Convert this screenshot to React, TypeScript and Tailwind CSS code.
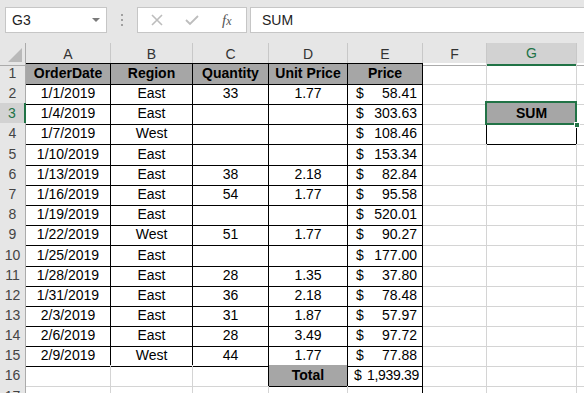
import clsx from "clsx";

type Row = { date: string; region: string; qty: string; unit: string; price: string };

const rows: Row[] = [
  { date: "1/1/2019", region: "East", qty: "33", unit: "1.77", price: "58.41" },
  { date: "1/4/2019", region: "East", qty: "", unit: "", price: "303.63" },
  { date: "1/7/2019", region: "West", qty: "", unit: "", price: "108.46" },
  { date: "1/10/2019", region: "East", qty: "", unit: "", price: "153.34" },
  { date: "1/13/2019", region: "East", qty: "38", unit: "2.18", price: "82.84" },
  { date: "1/16/2019", region: "East", qty: "54", unit: "1.77", price: "95.58" },
  { date: "1/19/2019", region: "East", qty: "", unit: "", price: "520.01" },
  { date: "1/22/2019", region: "West", qty: "51", unit: "1.77", price: "90.27" },
  { date: "1/25/2019", region: "East", qty: "", unit: "", price: "177.00" },
  { date: "1/28/2019", region: "East", qty: "28", unit: "1.35", price: "37.80" },
  { date: "1/31/2019", region: "East", qty: "36", unit: "2.18", price: "78.48" },
  { date: "2/3/2019", region: "East", qty: "31", unit: "1.87", price: "57.97" },
  { date: "2/6/2019", region: "East", qty: "28", unit: "3.49", price: "97.72" },
  { date: "2/9/2019", region: "West", qty: "44", unit: "1.77", price: "77.88" },
];

// rows 4, 9 and 16 are a pixel taller in the screenshot
const tall = [4, 9, 16];
const rowClass = (n: number) => clsx("grid grid-cols-[26px_85px_82px_76px_79px_75px_64px_90px_1fr]", tall.includes(n) ? "h-[21px]" : "h-[20px]");

const gridCols = "grid grid-cols-[26px_85px_82px_76px_79px_75px_64px_90px_1fr]";
const cell = "h-full flex items-center border-r border-b border-[#d4d4d4] overflow-hidden whitespace-nowrap";
const box = "border-black";
const head = "bg-[#a6a6a6] font-bold";

function RowHead({ n, active }: { n: number; active?: boolean }) {
  return (
    <div
      className={clsx(
        "h-full flex items-center justify-center border-b border-[#d4d4d4] text-[14px]",
        active
          ? "bg-[#d2d2d2] text-[#217346] border-r-2 border-r-[#217346]"
          : "bg-[#e6e6e6] text-[#444] border-r border-r-[#ababab]"
      )}
    >
      {n}
    </div>
  );
}

function Money({ value, total }: { value: string; total?: boolean }) {
  return (
    <div className={clsx(cell, box, "justify-between", total ? "pl-[6px] pr-[3px] tracking-[-0.3px]" : "pl-[8px] pr-[5px]")}>
      <span>$</span>
      <span>{value}</span>
    </div>
  );
}

function FormulaBar() {
  return (
    <div className="h-[43px] bg-[#e6e6e6] flex items-start pt-[7px] pl-[5px]">
      <div className="w-[102px] h-[26px] bg-white border border-[#c6c6c6] flex items-center justify-between pl-[6px] pr-[6px] text-[14px] text-[#222]">
        <span>G3</span>
        <span className="w-0 h-0 border-l-[4px] border-r-[4px] border-t-[4px] border-l-transparent border-r-transparent border-t-[#7a7a7a]" />
      </div>
      <div className="w-[30px] h-[26px] flex flex-col items-center justify-center gap-[3px]">
        <span className="w-[2px] h-[2px] bg-[#a0a0a0]" />
        <span className="w-[2px] h-[2px] bg-[#a0a0a0]" />
        <span className="w-[2px] h-[2px] bg-[#a0a0a0]" />
      </div>
      <div className="w-[110px] h-[26px] bg-white border border-[#c6c6c6] flex items-center">
        <svg width="12" height="12" viewBox="0 0 12 12" className="ml-[13px]">
          <path d="M1 1 L11 11 M11 1 L1 11" stroke="#bdbdbd" strokeWidth="1.6" fill="none" />
        </svg>
        <svg width="14" height="12" viewBox="0 0 14 12" className="ml-[22px]">
          <path d="M1 6 L5 10 L13 2" stroke="#bdbdbd" strokeWidth="1.8" fill="none" />
        </svg>
        <span className="ml-[23px] italic text-[15px] text-[#555] font-['Liberation_Serif',serif] leading-none">
          f<span className="text-[12px]">x</span>
        </span>
      </div>
      <div className="ml-[3px] flex-1 h-[26px] bg-white border border-r-0 border-[#c6c6c6] flex items-center pl-[11px] text-[14px] text-[#222]">
        SUM
      </div>
    </div>
  );
}

function ColHeads() {
  const letters = ["A", "B", "C", "D", "E", "F"];
  return (
    <div className={clsx(gridCols, "h-[20px] bg-[#e6e6e6] text-[14px] text-[#333]")}>
      <div className="border-r border-b border-[#ababab] relative">
        <span className="absolute right-[3px] bottom-[3px] w-0 h-0 [border-bottom:14px_solid_#b9b9b9] [border-left:14px_solid_transparent]" />
      </div>
      {letters.map((l) => (
        <div key={l} className="flex items-center justify-center border-r border-r-[#c8c8c8] border-b border-b-[#ababab]">
          {l}
        </div>
      ))}
      <div className="flex items-center justify-center bg-[#d2d2d2] text-[#217346] border-r border-r-[#c8c8c8] border-b-2 border-b-[#217346]">
        G
      </div>
      <div className="border-b border-[#ababab]" />
    </div>
  );
}

export default function App() {
  return (
    <div className="w-[584px] h-[393px] overflow-hidden bg-white font-['Liberation_Sans',Arial,sans-serif] text-black">
      <FormulaBar />
      <ColHeads />
      <div className="text-[14px]">
        <div className={rowClass(1)}>
          <RowHead n={1} />
          <div className={clsx(cell, box, head, "justify-center shadow-[inset_0_1px_0_#000]")}>OrderDate</div>
          <div className={clsx(cell, box, head, "justify-center shadow-[inset_0_1px_0_#000]")}>Region</div>
          <div className={clsx(cell, box, head, "justify-center shadow-[inset_0_1px_0_#000]")}>Quantity</div>
          <div className={clsx(cell, box, head, "justify-center shadow-[inset_0_1px_0_#000]")}>Unit Price</div>
          <div className={clsx(cell, box, head, "justify-center shadow-[inset_0_1px_0_#000]")}>Price</div>
          <div className={cell} />
          <div className={cell} />
          <div className={clsx(cell, "border-r-0")} />
        </div>
        {rows.map((r, i) => {
          const n = i + 2;
          return (
            <div key={n} className={rowClass(n)}>
              <RowHead n={n} active={n === 3} />
              <div className={clsx(cell, box, "justify-center")}>{r.date}</div>
              <div className={clsx(cell, box, "justify-center")}>{r.region}</div>
              <div className={clsx(cell, box, "justify-center")}>{r.qty}</div>
              <div className={clsx(cell, box, "justify-center")}>{r.unit}</div>
              <Money value={r.price} />
              <div className={clsx(cell, n === 4 && "border-r-black")} />
              {n === 3 ? (
                <div className={clsx(cell, head, "justify-center relative overflow-visible border-b-black")}>
                  SUM
                  <span className="absolute -left-[2px] -top-[2px] -right-[1px] -bottom-[1px] border-2 border-[#217346] pointer-events-none" />
                  <span className="absolute -right-[4px] -bottom-[4px] w-[6px] h-[6px] bg-[#217346] border border-white" />
                </div>
              ) : (
                <div className={clsx(cell, n === 4 && box)} />
              )}
              <div className={clsx(cell, "border-r-0")} />
            </div>
          );
        })}
        <div className={rowClass(16)}>
          <RowHead n={16} />
          <div className={cell} />
          <div className={cell} />
          <div className={clsx(cell, "border-r-black")} />
          <div className={clsx(cell, box, head, "justify-center")}>Total</div>
          <Money value="1,939.39" total />
          <div className={cell} />
          <div className={cell} />
          <div className={clsx(cell, "border-r-0")} />
        </div>
        <div className={rowClass(17)}>
          <RowHead n={17} />
          <div className={cell} />
          <div className={cell} />
          <div className={cell} />
          <div className={cell} />
          <div className={clsx(cell, "border-r-black")} />
          <div className={cell} />
          <div className={cell} />
          <div className={clsx(cell, "border-r-0")} />
        </div>
      </div>
    </div>
  );
}
